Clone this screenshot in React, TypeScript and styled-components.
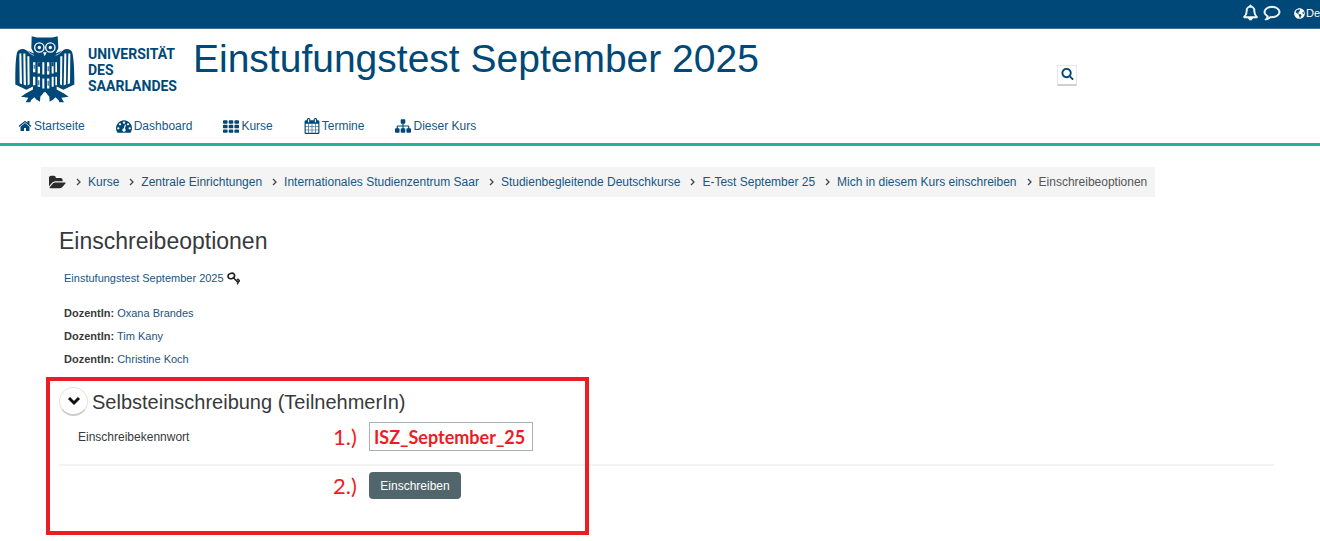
import React from "react";
import styled, { createGlobalStyle } from "styled-components";
import { FaGlobeAmericas } from "react-icons/fa";

const navy = "#004877";
const link = "#1a5580";
const ink = "#373a3c";
const red = "#ed1c24";

const GlobalStyle = createGlobalStyle`
  * { box-sizing: border-box; }
  body {
    margin: 0;
    background: #fff;
    color: ${ink};
    font: 12px/16px "Liberation Sans", Arial, sans-serif;
  }
  a { color: ${link}; text-decoration: none; }
  h1, h2, h3, p, ul, ol { margin: 0; padding: 0; font-weight: 400; }
  ul, ol { list-style: none; }
  button, input { font: inherit; }
`;

const glyphs = {
  home: "M1472 992v480q0 26-19 45t-45 19h-384v-384h-256v384h-384q-26 0-45-19t-19-45v-480q0-1 .5-3t.5-3l575-474 575 474q1 2 1 6zm223-69l-62 74q-8 9-21 11h-3q-13 0-21-7l-692-577-692 577q-12 8-24 7-13-2-21-11l-62-74q-8-10-7-23.5t11-21.5l719-599q32-26 76-26t76 26l244 204v-195q0-14 9-23t23-9h192q14 0 23 9t9 23v408l219 182q10 8 11 21.5t-7 23.5z",
  dashboard:
    "M384 1152q0-53-37.5-90.5t-90.5-37.5-90.5 37.5-37.5 90.5 37.5 90.5 90.5 37.5 90.5-37.5 37.5-90.5zm192-448q0-53-37.5-90.5t-90.5-37.5-90.5 37.5-37.5 90.5 37.5 90.5 90.5 37.5 90.5-37.5 37.5-90.5zm428 481l101-382q6-26-7.5-48.5t-38.5-29.5-48 6.5-30 39.5l-101 382q-60 5-107 43.5t-63 98.5q-20 77 20 146t117 89 146-20 89-117q16-60-6-117t-72-91zm660-33q0-53-37.5-90.5t-90.5-37.5-90.5 37.5-37.5 90.5 37.5 90.5 90.5 37.5 90.5-37.5 37.5-90.5zm-640-640q0-53-37.5-90.5t-90.5-37.5-90.5 37.5-37.5 90.5 37.5 90.5 90.5 37.5 90.5-37.5 37.5-90.5zm448 192q0-53-37.5-90.5t-90.5-37.5-90.5 37.5-37.5 90.5 37.5 90.5 90.5 37.5 90.5-37.5 37.5-90.5zm320 448q0 261-141 483-19 29-54 29h-1402q-35 0-54-29-141-221-141-483 0-182 71-348t191-286 286-191 348-71 348 71 286 191 191 286 71 348z",
  grid: "M96 256h320q96 0 96 96v192q0 96-96 96h-320q-96 0-96-96v-192q0-96 96-96zM736 256h320q96 0 96 96v192q0 96-96 96h-320q-96 0-96-96v-192q0-96 96-96zM1376 256h320q96 0 96 96v192q0 96-96 96h-320q-96 0-96-96v-192q0-96 96-96zM96 768h320q96 0 96 96v192q0 96-96 96h-320q-96 0-96-96v-192q0-96 96-96zM736 768h320q96 0 96 96v192q0 96-96 96h-320q-96 0-96-96v-192q0-96 96-96zM1376 768h320q96 0 96 96v192q0 96-96 96h-320q-96 0-96-96v-192q0-96 96-96zM96 1280h320q96 0 96 96v192q0 96-96 96h-320q-96 0-96-96v-192q0-96 96-96zM736 1280h320q96 0 96 96v192q0 96-96 96h-320q-96 0-96-96v-192q0-96 96-96zM1376 1280h320q96 0 96 96v192q0 96-96 96h-320q-96 0-96-96v-192q0-96 96-96z",
  calendar:
    "M192 1664h288v-288h-288v288zm352 0h320v-288h-320v288zm-352-352h288v-320h-288v320zm352 0h320v-320h-320v320zm-352-384h288v-288h-288v288zm736 736h320v-288h-320v288zm-384-736h320v-288h-320v288zm768 736h288v-288h-288v288zm-384-352h320v-320h-320v320zm-352-864v-288q0-13-9.5-22.5t-22.5-9.5h-64q-13 0-22.5 9.5t-9.5 22.5v288q0 13 9.5 22.5t22.5 9.5h64q13 0 22.5-9.5t9.5-22.5zm736 864h288v-320h-288v320zm-384-384h320v-288h-320v288zm384 0h288v-288h-288v288zm32-480v-288q0-13-9.5-22.5t-22.5-9.5h-64q-13 0-22.5 9.5t-9.5 22.5v288q0 13 9.5 22.5t22.5 9.5h64q13 0 22.5-9.5t9.5-22.5zm384-64v1280q0 52-38 90t-90 38h-1408q-52 0-90-38t-38-90v-1280q0-52 38-90t90-38h128v-96q0-66 47-113t113-47h64q66 0 113 47t47 113v96h384v-96q0-66 47-113t113-47h64q66 0 113 47t47 113v96h128q52 0 90 38t38 90z",
  sitemap:
    "M1792 1248v320q0 40-28 68t-68 28h-320q-40 0-68-28t-28-68v-320q0-40 28-68t68-28h96v-192h-512v192h96q40 0 68 28t28 68v320q0 40-28 68t-68 28h-320q-40 0-68-28t-28-68v-320q0-40 28-68t68-28h96v-192h-512v192h96q40 0 68 28t28 68v320q0 40-28 68t-68 28h-320q-40 0-68-28t-28-68v-320q0-40 28-68t68-28h96v-192q0-52 38-90t90-38h512v-192h-96q-40 0-68-28t-28-68v-320q0-40 28-68t68-28h320q40 0 68 28t28 68v320q0 40-28 68t-68 28h-96v192h512q52 0 90 38t38 90v192h96q40 0 68 28t28 68z",
  search:
    "M1216 832q0-185-131.5-316.5t-316.5-131.5-316.5 131.5-131.5 316.5 131.5 316.5 316.5 131.5 316.5-131.5 131.5-316.5zm512 832q0 52-38 90t-90 38q-54 0-90-38l-343-342q-179 124-399 124-143 0-273.5-55.5t-225-150-150-225-55.5-273.5 55.5-273.5 150-225 225-150 273.5-55.5 273.5 55.5 225 150 150 225 55.5 273.5q0 220-124 399l343 343q37 37 37 90z",
  folder:
    "M1879 952q0 31-31 66l-336 396q-43 51-120.5 86.5t-143.5 35.5h-1088q-34 0-60.5-13t-26.5-43q0-31 31-66l336-396q43-51 120.5-86.5t143.5-35.5h1088q34 0 60.5 13t26.5 43zm-343-344v160h-832q-94 0-197 47.5t-164 119.5l-337 396-5 6q0-4-.5-12.5t-.5-12.5v-960q0-92 66-158t158-66h320q92 0 158 66t66 158v32h544q92 0 158 66t66 158z",
  comment:
    "M896 384q-204 0-381.5 69.5t-282 187.5-104.5 255q0 112 71.5 213.5t201.5 175.5l87 50-27 96q-24 91-70 172 152-63 275-171l43-38 57 6q69 8 130 8 204 0 381.5-69.5t282-187.5 104.5-255-104.5-255-282-187.5-381.5-69.5zm896 512q0 174-120 321.5t-326 233-450 85.5q-70 0-145-8-198 175-460 242-49 14-114 22h-5q-15 0-27-10.5t-16-27.5v-1q-3-4-.5-12t2-10 4.5-9.5l6-9 7-8.5 8-9q7-8 31-34.5t34.5-38 31-39.5 32.5-51 27-59 26-76q-157-89-247.5-220t-90.5-281q0-130 71-248.5t191-204.5 286-136.5 348-50.5 348 50.5 286 136.5 191 204.5 71 248.5z",
  bell: "M912 1696q0-16-16-16-59 0-101.5-42.5t-42.5-101.5q0-16-16-16t-16 16q0 73 51.5 124.5t124.5 51.5q16 0 16-16zm-666-288h1300q-266-300-266-832 0-51-24-105t-69-103-121.5-80.5-169.5-31.5-169.5 31.5-121.5 80.5-69 103-24 105q0 532-266 832zm1482 0q0 52-38 90t-90 38h-448q0 106-75 181t-181 75-181-75-75-181h-448q-52 0-90-38t-38-90q50-42 91-88t85-119.5 74.5-158.5 50-206 19.5-260q0-152 117-282.5t307-158.5q-8-19-8-39 0-40 28-68t68-28 68 28 28 68q0 20-8 39 190 28 307 158.5t117 282.5q0 139 19.5 260t50 206 74.5 158.5 85 119.5 91 88z",
};

type GlyphName = keyof typeof glyphs;

function Glyph({ name, size = 16, outline = 0 }: { name: GlyphName; size?: number; outline?: number }) {
  return (
    <svg
      width={size}
      height={size}
      viewBox={name === "folder" ? "0 -64 1920 1920" : "0 0 1792 1792"}
      fill="currentColor"
      stroke="currentColor"
      strokeWidth={outline}
      overflow="visible"
      aria-hidden="true"
    >
      <path d={glyphs[name]} />
    </svg>
  );
}

const TopBar = styled.div`
  display: flex;
  justify-content: flex-end;
  align-items: center;
  height: 29px;
  padding-bottom: 4px;
  background: ${navy};
  border-bottom: 1px solid #3f7397;
  color: #fff;
`;

const TopButton = styled.button`
  display: flex;
  margin-right: 6px;
  padding: 0;
  border: 0;
  background: none;
  color: inherit;
`;

const Language = styled.a`
  display: flex;
  align-items: center;
  gap: 1px;
  margin-left: 8px;
  padding-top: 2px;
  color: #fff;
  font-size: 11px;
`;

const Header = styled.header`
  border-bottom: 3px solid #1fb595;
`;

const Brand = styled.div`
  display: flex;
  align-items: flex-start;
  padding: 7px 0 0 15px;
`;

const LogoLink = styled.a`
  display: flex;
  align-items: flex-start;
  gap: 13px;
  width: 178px;
  color: ${navy};
`;

const LogoText = styled.span`
  padding-top: 10px;
  font: 700 14px/16px Roboto, sans-serif;
`;

const Title = styled.h1`
  flex: 1;
  padding-top: 1px;
  color: ${navy};
  font-size: 39px;
  line-height: 44px;
`;

const SearchButton = styled.button`
  display: flex;
  align-items: center;
  justify-content: center;
  width: 20px;
  height: 21px;
  margin: 29px 243px 0 0;
  padding: 0 0 3px;
  border: 1px solid #e6e6e6;
  border-bottom: 2px solid #d0d0d0;
  background: #fff;
  color: ${navy};
`;

const Nav = styled.nav`
  display: flex;
  gap: 31px;
  padding: 15px 18px 9px;
`;

const NavLink = styled.a`
  display: flex;
  align-items: center;
  gap: 2px;
  svg { color: ${navy}; }
`;

const Main = styled.main`
  padding: 21px 46px 6px 41px;
`;

const Crumbs = styled.ol`
  display: flex;
  align-items: center;
  width: fit-content;
  height: 30px;
  padding: 0 8px;
  background: #f4f4f4;
`;

const Crumb = styled.li`
  display: flex;
  align-items: center;
  white-space: nowrap;
  color: #555;
  > svg:only-child { color: #2b2b2b; }
`;

const Arrow = styled.svg`
  width: 5px;
  height: 8px;
  margin: 0 7px 0 10px;
  fill: none;
  stroke: #444;
  stroke-width: 1.3;
`;

const Content = styled.div`
  padding-left: 18px;
`;

const PageTitle = styled.h2`
  margin-top: 30px;
  font-size: 23px;
  line-height: 28px;
`;

const Course = styled.p`
  display: flex;
  align-items: center;
  gap: 3px;
  margin: 15px 0 0 5px;
  font-size: 11px;
`;

const Teachers = styled.ul`
  display: grid;
  gap: 7px;
  margin: 19px 0 0 5px;
  font-size: 11px;
`;

const Enrol = styled.form`
  position: relative;
  margin-top: 10px;
  padding-top: 10px;
  height: 158px;
`;

const Highlight = styled.div`
  position: absolute;
  top: 0;
  left: -13px;
  width: 543px;
  height: 158px;
  border: 4px solid ${red};
  pointer-events: none;
`;

const SectionHead = styled.div`
  display: flex;
  align-items: center;
  gap: 4px;
`;

const Toggle = styled.button`
  display: flex;
  align-items: center;
  justify-content: center;
  width: 29px;
  height: 29px;
  padding: 0;
  border: 1px solid #e4e4e4;
  border-bottom: 2px solid #ccc;
  border-radius: 50%;
  background: #fff;
`;

const SectionTitle = styled.h3`
  font-size: 20px;
  line-height: 28px;
`;

const Row = styled.div`
  display: grid;
  grid-template-columns: 255px 36px auto;
  align-items: center;
  justify-content: start;
  padding-left: 19px;
`;

const KeyRow = styled(Row)`
  margin-top: 6px;
  padding-bottom: 13px;
  border-bottom: 2px solid #f3f3f3;
`;

const ButtonRow = styled(Row)`
  margin-top: 6px;
`;

const Step = styled.span`
  color: ${red};
  font: 400 22px/26px Lato, sans-serif;
`;

const KeyInput = styled.input`
  width: 164px;
  height: 29px;
  padding: 1px 4px 0;
  border: 1px solid #aab0b5;
  background: #fff;
  color: ${red};
  font: 700 18px/24px Lato, sans-serif;
`;

const Submit = styled.button`
  grid-column: 3;
  justify-self: start;
  width: 92px;
  height: 27px;
  padding: 0;
  border: 0;
  border-radius: 4px;
  background: #51666c;
  color: #fff;
`;

const navItems: { icon: GlyphName; label: string }[] = [
  { icon: "home", label: "Startseite" },
  { icon: "dashboard", label: "Dashboard" },
  { icon: "grid", label: "Kurse" },
  { icon: "calendar", label: "Termine" },
  { icon: "sitemap", label: "Dieser Kurs" },
];

const trail = [
  "Kurse",
  "Zentrale Einrichtungen",
  "Internationales Studienzentrum Saar",
  "Studienbegleitende Deutschkurse",
  "E-Test September 25",
  "Mich in diesem Kurs einschreiben",
];

const teachers = ["Oxana Brandes", "Tim Kany", "Christine Koch"];

function Owl() {
  return (
    <svg width="60" height="67" viewBox="0 0 180 200" fill={navy} aria-hidden="true">
      <path d="M50 0 66 4H112L128 0 130 36 122 52 150 39Q168 37 172 50 178 75 178 145L145 161 125 151V168H54V151L34 161 1 145Q0 75 6 50 10 37 28 39L57 52 49 36Z" />
      <path d="M54 160H86V170L76 182 75 197 64 190 58 183 48 192 46 198H32L40 185 18 182 32 172ZM125 160H93V170L103 182 104 197 115 190 121 183 131 192 133 198H147L139 185 161 182 147 172Z" />
      <path d="M30 37 46 52 57 58M149 37 133 52 122 58" fill="none" stroke="#fff" strokeWidth="2" />
      <g fill="none" stroke="#fff" strokeWidth="4">
        <circle cx="73" cy="34" r="14" />
        <circle cx="106" cy="34" r="14" />
      </g>
      <g fill="#fff">
        <circle cx="73" cy="34" r="5" />
        <circle cx="106" cy="34" r="5" />
        <path d="M84 48H95L89 60ZM13 52h6l2 92-7-3ZM25 52h6l2 96-7-3ZM37 60h6l1 84-6 4ZM166 52h-6l-2 92 7-3ZM154 52h-6l-2 96 7-3ZM142 60h-6l-1 84 6 4Z" />
        <path d="M54 78h7v30h-7ZM68 78h7v34h-7ZM82 78h6v37h-6ZM96 78h7v37h-7ZM110 78h6v34h-6ZM121 78h5v30h-5ZM54 122h7v25h-7ZM68 122h7v30h-7ZM82 127h6v30h-6ZM96 127h7v30h-7ZM110 122h6v30h-6ZM121 122h5v25h-5Z" />
      </g>
      <path d="M56 86h3v12h-3ZM68 78h7v14h-7ZM98 90h3v15h-3ZM110 78h6v12h-6ZM70 132h3v15h-3ZM98 134h3v15h-3Z" />
    </svg>
  );
}

function Separator() {
  return (
    <Arrow viewBox="0 0 5 8" aria-hidden="true">
      <path d="M1 1 4 4 1 7" />
    </Arrow>
  );
}

function KeyIcon() {
  return (
    <svg width="13" height="13" viewBox="0 0 13 13" fill="none" stroke="#222" aria-hidden="true">
      <ellipse cx="4.3" cy="4" rx="3.3" ry="2.7" strokeWidth="1.6" transform="rotate(-20 4.3 4)" />
      <path d="M6.5 5.8 11.5 11M11.5 11 10 12.3M9.4 8.8 11 7.3l1.5 1.5-1.3 1.4" strokeWidth="1.5" />
    </svg>
  );
}

export default function App() {
  return (
    <>
      <GlobalStyle />
      <TopBar>
        <TopButton aria-label="Mitteilungen">
          <Glyph name="bell" size={15} outline={110} />
        </TopButton>
        <TopButton aria-label="Nachrichten">
          <Glyph name="comment" outline={90} />
        </TopButton>
        <Language href="#">
          <FaGlobeAmericas size={11} />
          De
        </Language>
      </TopBar>
      <Header>
        <Brand>
          <LogoLink href="#">
            <Owl />
            <LogoText>
              UNIVERSITÄT
              <br />
              DES
              <br />
              SAARLANDES
            </LogoText>
          </LogoLink>
          <Title>Einstufungstest September 2025</Title>
          <SearchButton aria-label="Suchen">
            <Glyph name="search" size={13} />
          </SearchButton>
        </Brand>
        <Nav>
          {navItems.map((item) => (
            <NavLink href="#" key={item.label}>
              <Glyph name={item.icon} size={item.icon === "home" ? 14 : 16} />
              {item.label}
            </NavLink>
          ))}
        </Nav>
      </Header>
      <Main>
        <Crumbs>
          <Crumb>
            <Glyph name="folder" size={17} />
          </Crumb>
          {trail.map((label) => (
            <Crumb key={label}>
              <Separator />
              <a href="#">{label}</a>
            </Crumb>
          ))}
          <Crumb>
            <Separator />
            Einschreibeoptionen
          </Crumb>
        </Crumbs>
        <Content>
          <PageTitle>Einschreibeoptionen</PageTitle>
          <Course>
            <a href="#">Einstufungstest September 2025</a>
            <KeyIcon />
          </Course>
          <Teachers>
            {teachers.map((name) => (
              <li key={name}>
                <b>DozentIn:</b> <a href="#">{name}</a>
              </li>
            ))}
          </Teachers>
          <Enrol onSubmit={(event) => event.preventDefault()}>
            <SectionHead>
              <Toggle type="button" aria-label="Abschnitt einklappen">
                <svg width="14" height="10" viewBox="0 0 14 10" fill="none" stroke="#111" strokeWidth="3">
                  <path d="M2 2 7 7 12 2" />
                </svg>
              </Toggle>
              <SectionTitle>Selbsteinschreibung (TeilnehmerIn)</SectionTitle>
            </SectionHead>
            <KeyRow>
              <label htmlFor="enrol-key">Einschreibekennwort</label>
              <Step>1.)</Step>
              <KeyInput id="enrol-key" defaultValue="ISZ_September_25" />
            </KeyRow>
            <ButtonRow>
              <span />
              <Step>2.)</Step>
              <Submit type="submit">Einschreiben</Submit>
            </ButtonRow>
            <Highlight />
          </Enrol>
        </Content>
      </Main>
    </>
  );
}
